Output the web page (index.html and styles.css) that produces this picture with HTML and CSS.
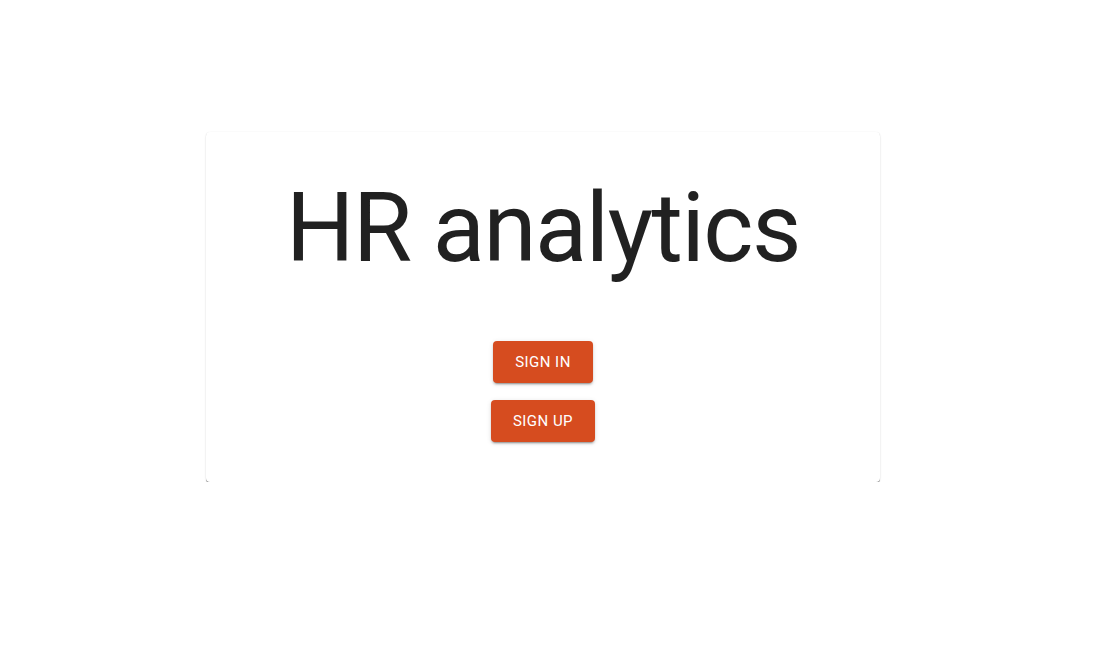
FILE: index.html
```html
<!DOCTYPE html>
<html lang="en">

<head>
    <meta charset="UTF-8">
    <meta name="viewport" content="width=device-width, initial-scale=1.0">
    <title>HR analytics</title>
    <link rel="stylesheet" href="styles.css">
</head>

<body>
    <div class="page">
        <div class="card">
            <h1 class="title">HR analytics</h1>
            <div class="actions">
                <button class="btn">Sign in</button>
                <button class="btn">Sign up</button>
            </div>
        </div>
    </div>
</body>

</html>
```

FILE: styles.css
```css
* {
    margin: 0;
    padding: 0;
    box-sizing: border-box;
}

body {
    background: #fff;
    font-family: Roboto, "Liberation Sans", sans-serif;
    color: rgba(0, 0, 0, 0.87);
}

.page {
    padding: 132px 0 0 206px;
}

.card {
    width: 674px;
    padding: 40px 0;
    border-radius: 4px;
    background: #fff;
    box-shadow: 0px 1px 0px 0px rgba(0, 0, 0, 0.3),
        0px 1px 1px 0px rgba(0, 0, 0, 0.2),
        0px 0px 1px 0px rgba(0, 0, 0, 0.08),
        0px 1px 3px 0px rgba(0, 0, 0, 0.06);
    display: flex;
    flex-direction: column;
    align-items: center;
}

.title {
    font-size: 96px;
    font-weight: 400;
    line-height: 112px;
    letter-spacing: -1.5px;
    text-align: center;
    margin-bottom: 57px;
}

.actions {
    display: flex;
    flex-direction: column;
    align-items: center;
    gap: 17px;
}

.btn {
    border: none;
    outline: none;
    cursor: pointer;
    color: #fff;
    background: #d64c1f;
    font-family: Roboto, "Liberation Sans", sans-serif;
    font-size: 15px;
    font-weight: 400;
    line-height: 26px;
    letter-spacing: 0.46px;
    text-transform: uppercase;
    padding: 8px 22px;
    border-radius: 4px;
    box-shadow: 0px 3px 1px -2px rgba(0, 0, 0, 0.2),
        0px 2px 2px 0px rgba(0, 0, 0, 0.14),
        0px 1px 5px 0px rgba(0, 0, 0, 0.12);
}
```
